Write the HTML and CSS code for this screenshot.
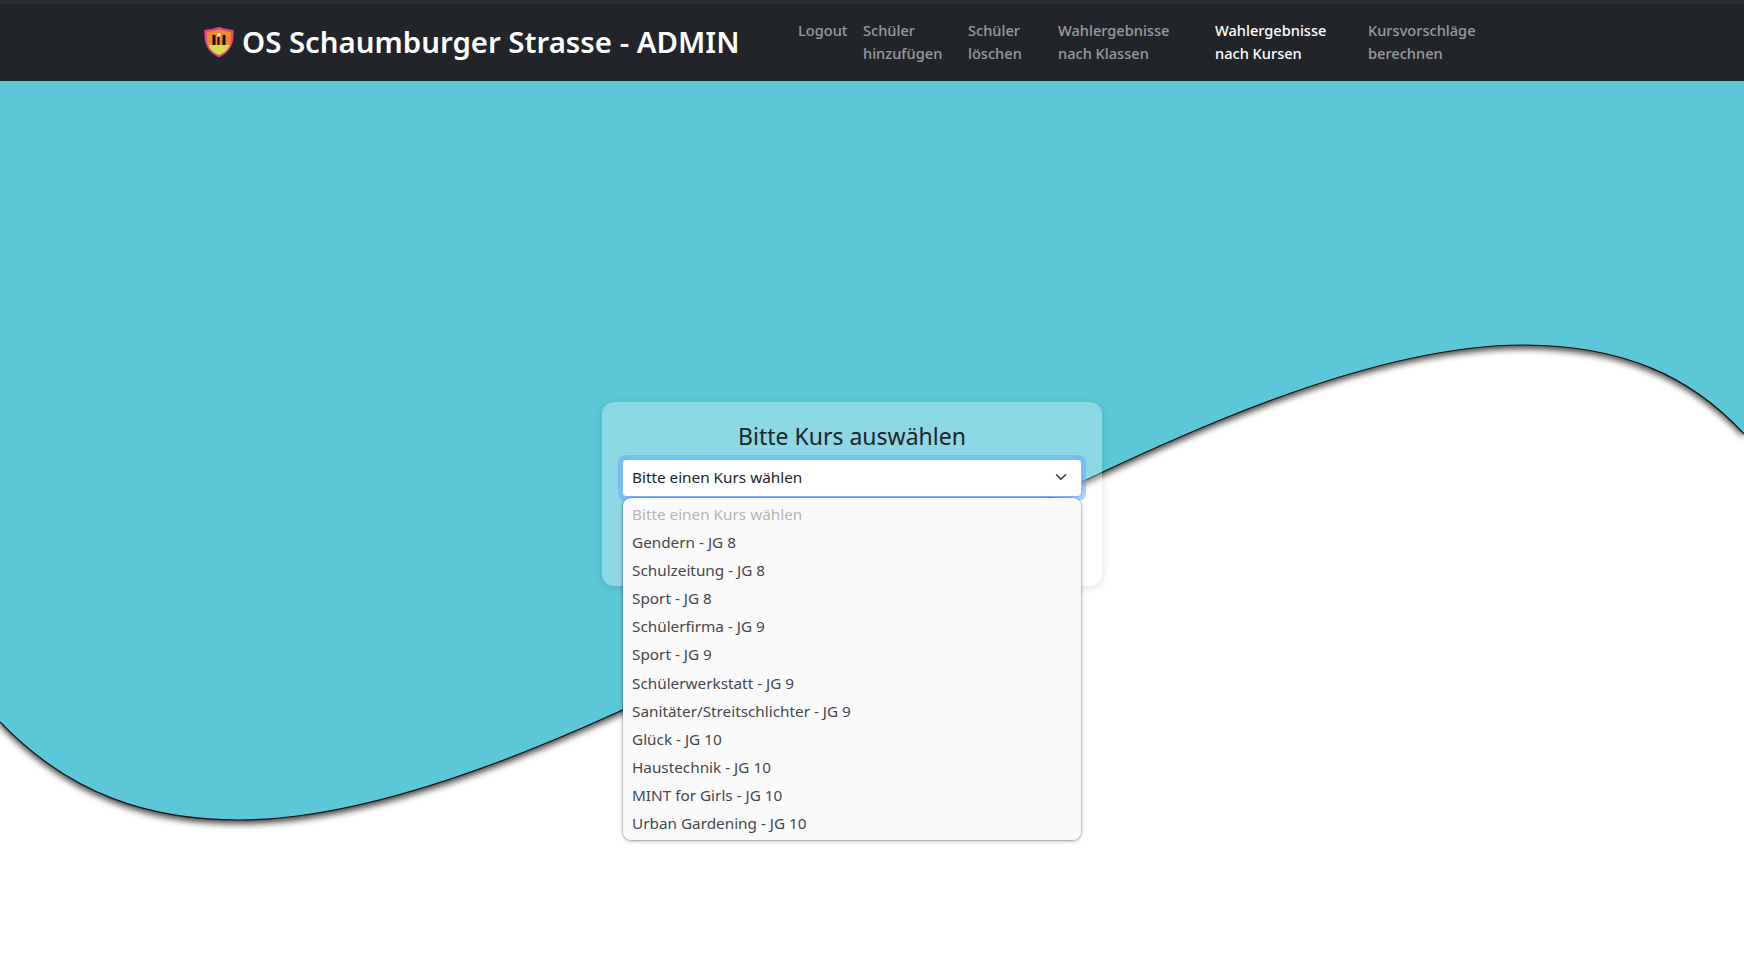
FILE: index.html
```html
<!DOCTYPE html>
<html lang="de">
<head>
  <meta charset="UTF-8" />
  <title>OS Schaumburger Strasse - ADMIN</title>
  <link rel="stylesheet" href="styles.css">
</head>
<body>
  <!-- Wave background -->
  <svg class="wave" viewBox="0 0 1744 965" preserveAspectRatio="none">
    <path class="wave-fill" d="M0,722 C70,795 150,820 239,820 C595,820 1167,345 1523,345 C1620,345 1690,375 1744,434 L1744,0 L0,0 Z" />
    <path class="wave-line" d="M0,722 C70,795 150,820 239,820 C595,820 1167,345 1523,345 C1620,345 1690,375 1744,434" />
  </svg>

  <nav class="navbar">
    <a class="brand" href="#">
      <svg class="brand-logo" viewBox="0 0 30 32">
        <path d="M15 1 C20 2.500 25 3.500 29.500 4 C30 14 29 25 15 31.500 C1 25 0 14 0.500 4 C5 3.500 10 2.500 15 1 Z" fill="#e8427f" />
        <path d="M15 3.500 C19 4.500 23 5.500 27 6 C27.500 11 27.200 16 25.800 19 L4.200 19 C2.800 16 2.500 11 3 6 C7 5.500 11 4.500 15 3.500 Z" fill="#f5862e" />
        <path d="M4.200 19 L25.800 19 C24 24 20 27 15 29 C10 27 6 24 4.200 19 Z" fill="#cfe04a" />
        <rect x="8.500" y="9" width="3" height="10" fill="#15130f" />
        <rect x="18.500" y="9" width="3" height="10" fill="#15130f" />
        <rect x="13.500" y="11" width="2" height="8" fill="#15130f" />
        <rect x="13" y="7" width="3.500" height="3" fill="#fff3dc" />
      </svg>
      OS Schaumburger Strasse - ADMIN
    </a>
    <div class="nav-links">
      <a href="#">Logout</a>
      <a href="#">Schüler<br>hinzufügen</a>
      <a href="#">Schüler<br>löschen</a>
      <a href="#">Wahlergebnisse<br>nach Klassen</a>
      <a class="active" href="#">Wahlergebnisse<br>nach Kursen</a>
      <a href="#">Kursvorschläge<br>berechnen</a>
    </div>
  </nav>

  <main class="page">
    <div class="card">
      <h2>Bitte Kurs auswählen</h2>
      <div class="select-wrap">
        <div class="select">
          <span>Bitte einen Kurs wählen</span>
          <svg class="chevron" viewBox="0 0 16 16">
            <path d="M2 5l6 6 6-6" fill="none" stroke="#343a40" stroke-width="2" stroke-linecap="round" stroke-linejoin="round" />
          </svg>
        </div>
        <ul class="options">
          <li class="disabled">Bitte einen Kurs wählen</li>
          <li>Gendern - JG 8</li>
          <li>Schulzeitung - JG 8</li>
          <li>Sport - JG 8</li>
          <li>Schülerfirma - JG 9</li>
          <li>Sport - JG 9</li>
          <li>Schülerwerkstatt - JG 9</li>
          <li>Sanitäter/Streitschlichter - JG 9</li>
          <li>Glück - JG 10</li>
          <li>Haustechnik - JG 10</li>
          <li>MINT for Girls - JG 10</li>
          <li>Urban Gardening - JG 10</li>
        </ul>
      </div>
    </div>
  </main>
</body>
</html>
```

FILE: styles.css
```css
html {
  background: #fff;
}

html, body {
  margin: 0;
  padding: 0;
  height: 100%;
  overflow: hidden;
  font-family: "Noto Sans", sans-serif;
  color: #212529;
}

.wave {
  position: absolute;
  top: 0;
  left: 0;
  width: 100%;
  height: 100%;
  z-index: -1;
}

.wave-fill {
  fill: #5bc7d9;
  filter: drop-shadow(0 4px 3px rgba(0, 0, 0, 0.7));
}

.wave-line {
  fill: none;
  stroke: #111;
  stroke-width: 1.2;
}

.navbar {
  display: flex;
  align-items: center;
  box-sizing: border-box;
  height: 81px;
  padding-left: 204px;
  padding-bottom: 2px;
  background: #212529;
  border-top: 4px solid #2b2a33;
}

.brand {
  display: flex;
  align-items: center;
  gap: 8px;
  width: 594px;
  font-size: 29.400px;
  font-weight: 600;
  color: #fff;
  text-decoration: none;
  white-space: nowrap;
}

.brand-logo {
  width: 30px;
  height: 32px;
}

.nav-links {
  display: grid;
  grid-template-columns: 65px 105px 90px 157px 153px 120px;
  align-items: start;
  font-size: 14.600px;
  line-height: 23px;
}

.nav-links a {
  color: rgba(255, 255, 255, 0.55);
  text-decoration: none;
  font-weight: 500;
  white-space: nowrap;
}

.nav-links a.active {
  color: #fff;
}

.page {
  padding: 321px 0 0 602px;
}

.card {
  box-sizing: border-box;
  width: 500px;
  height: 184px;
  padding: 20px 20px 0;
  background: rgba(255, 255, 255, 0.3);
  border-radius: 12px;
  box-shadow: 0 2px 8px rgba(0, 0, 0, 0.12);
}

.card h2 {
  margin: 0 0 8px;
  font-size: 23px;
  line-height: 29px;
  font-weight: 400;
  text-align: center;
}

.select-wrap {
  position: relative;
}

.select {
  display: flex;
  align-items: center;
  justify-content: space-between;
  box-sizing: border-box;
  height: 38px;
  padding: 0 12px 2px 9px;
  background: #fff;
  border: 1px solid #86b7fe;
  border-radius: 4px;
  box-shadow: 0 0 0 4px rgba(100, 170, 255, 0.55);
  font-size: 15.300px;
}

.chevron {
  width: 16px;
  height: 12px;
}

.options {
  position: absolute;
  top: 39px;
  left: 1px;
  right: 1px;
  margin: 0;
  padding: 2px 0 3px;
  list-style: none;
  background: #fafafa;
  border-radius: 8px;
  box-shadow: 0 0 0 1px rgba(0, 0, 0, 0.12), 0 1px 4px rgba(0, 0, 0, 0.3);
  font-size: 15.300px;
  color: #44484d;
}

.options li {
  height: 28.100px;
  line-height: 28px;
  padding-left: 9px;
}

.options li.disabled {
  color: #b5b5b5;
}
```
